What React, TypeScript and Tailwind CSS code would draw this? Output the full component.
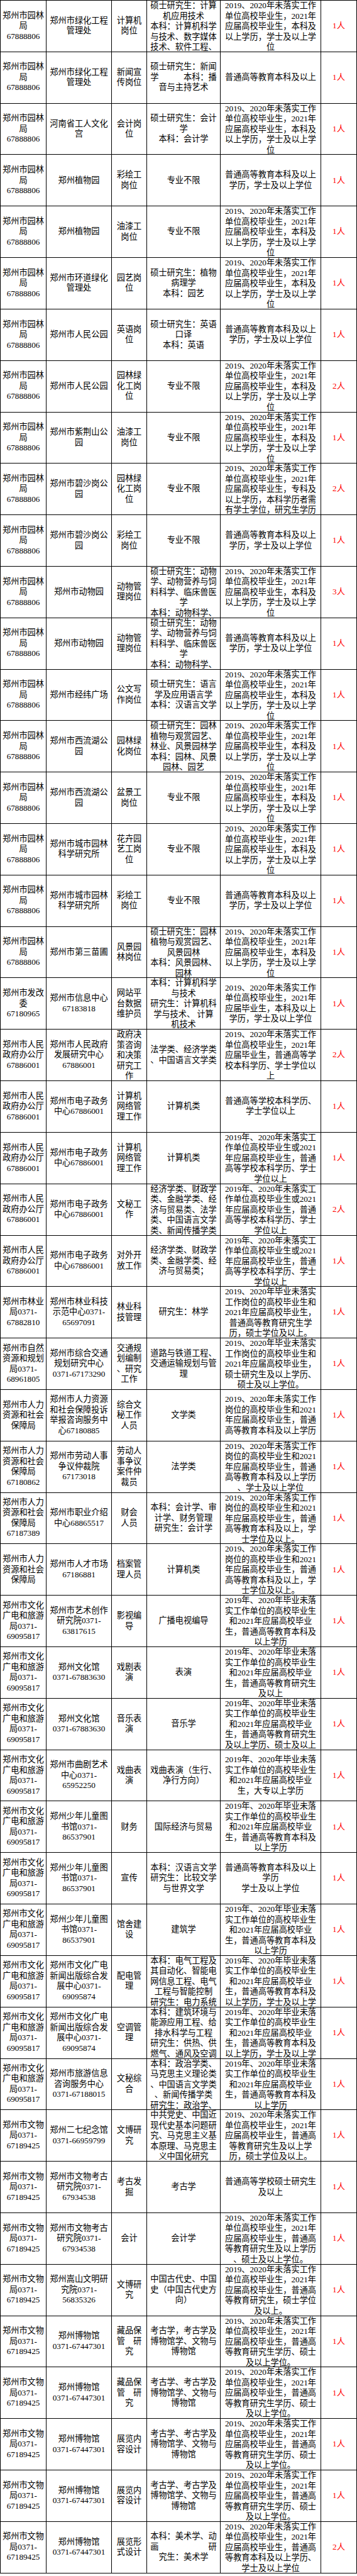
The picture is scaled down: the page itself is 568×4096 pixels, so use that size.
const YL = "郑州市园林\n局\n67888806";
const L1 = "2019、2020年未落实工作\n单位高校毕业生，2021年\n应届高校毕业生，本科及\n以上学历，学士及以上学\n位";
const P1 = "普通高等教育本科及以上\n学历，学士及以上学位";
const ZF = "郑州市人民\n政府办公厅\n67886001";
const DZ = "郑州市电子政务\n中心67886001";
const E1 = "2019年、2020年未落实工\n作单位高校毕业生或2021\n年应届高校毕业生，普通\n高等学校本科学历、学士\n学位以上";
const F1 = "2019、2020年未落实工作\n岗位的高校毕业生和2021\n年应届高校毕业生，普通\n高等教育本科及以上，学\n士学位及以上。";
const WL = "郑州市文化\n广电和旅游\n局0371-\n69095817";
const G1 = "2019年、2020年毕业未落\n实工作单位的高校毕业生\n和2021年应届高校毕业\n生，普通高等教育本科及\n以上学历";
const H1 = "2019年、2020年毕业未落\n实工作单位的高校毕业生\n和2021年应届高校毕业\n生，普通高等教育本科及\n以上学历，学士及以上学";
const WW = "郑州市文物\n局0371-\n67189425";
const BWG = "郑州博物馆\n0371-67447301";
const K1 = "2019、2020年未落实工作\n单位高校毕业生，2021年\n应届高校毕业生，普通高\n等教育研究生学历、硕士\n及以上学位。";
const DW = "硕士研究生：动物\n学、动物营养与饲\n料科学、临床兽医\n学\n本科：动物科学、";
const KG = "考古学、考古学及\n博物馆学、文物与\n博物馆";

const rows: string[][] = [
  [YL, "郑州市绿化工程\n管理处", "计算机\n岗位", "硕士研究生：计算\n机应用技术\n本科：计算机科学\n与技术、数字媒体\n技术、软件工程、", L1, "1人"],
  [YL, "郑州市绿化工程\n管理处", "新闻宣\n传岗位", "硕士研究生：新闻\n学　　　本科：播\n音与主持艺术", "普通高等教育本科及以上", "1人"],
  [YL, "河南省工人文化\n宫", "会计岗\n位", "硕士研究生：会计\n学\n本科：会计学", L1, "1人"],
  [YL, "郑州植物园", "彩绘工\n岗位", "专业不限", P1, "1人"],
  [YL, "郑州植物园", "油漆工\n岗位", "专业不限", L1, "1人"],
  [YL, "郑州市环道绿化\n管理处", "园艺岗\n位", "硕士研究生：植物\n病理学\n本科：园艺", L1, "1人"],
  [YL, "郑州市人民公园", "英语岗\n位", "硕士研究生：英语\n口译\n本科：英语", P1, "1人"],
  [YL, "郑州市人民公园", "园林绿\n化工岗\n位", "专业不限", L1, "2人"],
  [YL, "郑州市紫荆山公\n园", "油漆工\n岗位", "专业不限", L1, "1人"],
  [YL, "郑州市碧沙岗公\n园", "园林绿\n化工岗\n位", "专业不限", "2019、2020年未落实工作\n单位高校毕业生，2021年\n应届高校毕业生，专科及\n以上学历，本科学历者需\n有学士学位，研究生学历", "2人"],
  [YL, "郑州市碧沙岗公\n园", "彩绘工\n岗位", "专业不限", P1, "1人"],
  [YL, "郑州市动物园", "动物管\n理岗位", DW, L1, "3人"],
  [YL, "郑州市动物园", "动物管\n理岗位", DW, P1, "1人"],
  [YL, "郑州市经纬广场", "公文写\n作岗位", "硕士研究生：语言\n学及应用语言学\n本科：汉语言文学", L1, "1人"],
  [YL, "郑州市西流湖公\n园", "园林绿\n化岗位", "硕士研究生：园林\n植物与观赏园艺、\n林业、风景园林学\n本科：园林、风景\n园林、园艺", L1, "1人"],
  [YL, "郑州市西流湖公\n园", "盆景工\n岗位", "专业不限", L1, "1人"],
  [YL, "郑州市城市园林\n科学研究所", "花卉园\n艺工岗\n位", "专业不限", L1, "1人"],
  [YL, "郑州市城市园林\n科学研究所", "彩绘工\n岗位", "专业不限", P1, "1人"],
  [YL, "郑州市第三苗圃", "风景园\n林岗位", "硕士研究生：园林\n植物与观赏园艺、\n风景园林\n本科：风景园林、\n园林", L1, "1人"],
  ["郑州市发改\n委\n67180965", "郑州市信息中心\n67183818", "网站平\n台数据\n维护员", "本科：计算机科学\n与技术\n研究生：计算机科\n学与技术、 计算\n机技术", "2019、2020年未落实工作\n单位高校毕业生，2021年\n应届毕业生，本科及以上\n学历，学士及以上学位", "1人"],
  [ZF, "郑州市人民政府\n发展研究中心\n67886001", "政府决\n策咨询\n和决策\n研究工\n作", "法学类、经济学类\n、中国语言文学类", "2019、2020年未落实工作\n单位高校毕业生，2021年\n应届毕业生，普通高等学\n校本科学历、学士学位以\n上", "2人"],
  [ZF, DZ, "计算机\n网络管\n理工作", "计算机类", "普通高等学校本科学历、\n学士学位以上", "1人"],
  [ZF, DZ, "计算机\n网络管\n理工作", "计算机类", E1, "1人"],
  [ZF, DZ, "文秘工\n作", "经济学类、财政学\n类、金融学类、经\n济与贸易类、法学\n类、中国语言文学\n类、新闻传播学类", E1, "2人"],
  [ZF, DZ, "对外开\n放工作", "经济学类、财政学\n类、金融学类、经\n济与贸易类；", E1, "1人"],
  ["郑州市林业\n局0371-\n67882810", "郑州市林业科技\n示范中心0371-\n65697091", "林业科\n技管理", "研究生：林学", "2019、2020年毕业未落实\n工作岗位的高校毕业生和\n2021年应届高校毕业生，\n普通高等教育研究生学\n历，硕士学位及以上。", "1人"],
  ["郑州市自然\n资源和规划\n局0371-\n68961805", "郑州市综合交通\n规划研究中心\n0371-67173290", "交通规\n划编制\n、研究\n工作", "道路与铁道工程、\n交通运输规划与管\n理", "2019、2020年毕业未落实\n工作岗位的高校毕业生和\n2021年应届高校毕业生，\n硕士研究生及以上学历、\n硕士及以上学位。", "1人"],
  ["郑州市人力\n资源和社会\n保障局", "郑州市人力资源\n和社会保障投诉\n举报咨询服务中\n心67180885", "综合文\n秘工作\n人员", "文学类", "2019、2020年未落实工作\n岗位的高校毕业生和2021\n年应届高校毕业生，普通\n高等教育本科及以上学历", "1人"],
  ["郑州市人力\n资源和社会\n保障局\n67180862", "郑州市劳动人事\n争议仲裁院\n67173018", "劳动人\n事争议\n案件仲\n裁员", "法学类", "2019、2020年未落实工作\n岗位的高校毕业生和2021\n年应届高校毕业生，普通\n高等教育本科及以上学历\n、学士及以上学位", "1人"],
  ["郑州市人力\n资源和社会\n保障局\n67187389", "郑州市职业介绍\n中心68865517", "财会\n人员", "本科：会计学、审\n计学、财务管理\n研究生：会计学", F1, "1人"],
  ["郑州市人力\n资源和社会\n保障局", "郑州市人才市场\n67186881", "档案管\n理人员", "计算机类", F1, "1人"],
  [WL, "郑州市艺术创作\n研究院0371-\n63817615", "影视编\n导", "广播电视编导", G1, "1人"],
  [WL, "郑州文化馆\n0371-67883630", "戏剧表\n演", "表演", "2019年、2020年毕业未落\n实工作单位的高校毕业生\n和2021年应届高校毕业\n生，普通高等教育研究生\n及以上", "1人"],
  [WL, "郑州文化馆\n0371-67883630", "音乐表\n演", "音乐学", "2019年、2020年毕业未落\n实工作单位的高校毕业生\n和2021年应届高校毕业\n生，普通高等教育研究生\n及以上学历、硕士及以上", "1人"],
  [WL, "郑州市曲剧艺术\n中心0371-\n65952250", "戏曲表\n演", "戏曲表演（生行、\n净行方向）", "2019年、2020年毕业未落\n实工作单位的高校毕业生\n和2021年应届高校毕业\n生，大专以上学历", "1人"],
  [WL, "郑州少年儿童图\n书馆0371-\n86537901", "财务", "国际经济与贸易", G1, "1人"],
  [WL, "郑州少年儿童图\n书馆0371-\n86537901", "宣传", "本科：汉语言文学\n研究生：比较文学\n与世界文学", "普通高等教育本科及以上\n学历\n学士及以上学位", "1人"],
  [WL, "郑州少年儿童图\n书馆0371-\n86537901", "馆舍建\n设", "建筑学", G1, "1人"],
  [WL, "郑州市文化广电\n新闻出版综合发\n展中心0371-\n69095874", "配电管\n理", "本科：电气工程及\n其自动化、智能电\n网信息工程、电气\n工程与智能控制\n研究生：电力系统", H1, "1人"],
  [WL, "郑州市文化广电\n新闻出版综合发\n展中心0371-\n69095874", "空调管\n理", "本科：建筑环境与\n能源应用工程、给\n排水科学与工程\n研究生：供热、供\n燃气、通风及空调", H1, "1人"],
  [WL, "郑州市旅游信息\n咨询服务中心\n0371-67188015", "文秘综\n合", "本科：政治学类、\n马克思主义理论类\n、中国语言文学类\n、新闻传播学类\n研究生：政治学、", G1, "1人"],
  [WW, "郑州二七纪念馆\n0371-66959799", "文博研\n究", "中共党史、中国近\n现代史基本问题研\n究、马克思主义基\n本原理、马克思主\n义中国化研究", "2019、2020年未落实工作\n单位高校毕业生，2021年\n应届高校毕业生，普通高\n等教育研究生及以上学\n历，硕士学位及以上。", "1人"],
  [WW, "郑州市文物考古\n研究院0371-\n67934538", "考古发\n掘", "考古学", "普通高等学校硕士研究生\n及以上", "1人"],
  [WW, "郑州市文物考古\n研究院0371-\n67934538", "会计", "会计学", "2019、2020年未落实工作\n单位高校毕业生，2021年\n应届高校毕业生，普通高\n等教育研究生及以上学历\n、硕士及以上学位。", "1人"],
  [WW, "郑州嵩山文明研\n究院0371-\n56835326", "文博研\n究", "中国古代史、中国\n史（中国古代史方\n向）", "2019、2020年未落实工作\n单位高校毕业生，2021年\n应届高校毕业生，普通高\n等教育研究生，硕士学位\n及以上。", "1人"],
  [WW, BWG, "藏品保\n管　研\n究", "考古学，考古学及\n博物馆学、文物与\n博物馆", K1, "1人"],
  [WW, BWG, "藏品保\n管　研\n究", KG, K1, "1人"],
  [WW, BWG, "展览内\n容设计", KG, K1, "1人"],
  [WW, BWG, "展览内\n容设计", KG, K1, "1人"],
  [WW, BWG, "展览形\n式设计", "本科：美术学、动\n画　　　　　　研\n究生：美术学", "2019、2020年未落实工作\n单位高校毕业生，2021年\n应届高校毕业生，普通高\n等教育本科及以上学历、\n学士及以上学位", "2人"],
];

function Cell({ text, red }: { text: string; red?: boolean }) {
  return (
    <div className="h-[81.82px] overflow-hidden border-r border-b border-black flex flex-col">
      <div className={red ? "my-auto whitespace-pre text-center text-[#ff0000]" : "my-auto whitespace-pre text-center"}>
        {text}
      </div>
    </div>
  );
}

export default function App() {
  return (
    <div className="w-[568px] bg-white text-black font-['Liberation_Serif','Noto_Sans_CJK_SC',serif] text-[13.2px] leading-[16.5px]">
      <div className="grid grid-cols-[73px_104px_56px_117px_160px_57px] border-l border-t border-black">
        {rows.map((r, i) =>
          r.map((c, j) => <Cell key={i + "-" + j} text={c} red={j === 5} />)
        )}
      </div>
    </div>
  );
}
